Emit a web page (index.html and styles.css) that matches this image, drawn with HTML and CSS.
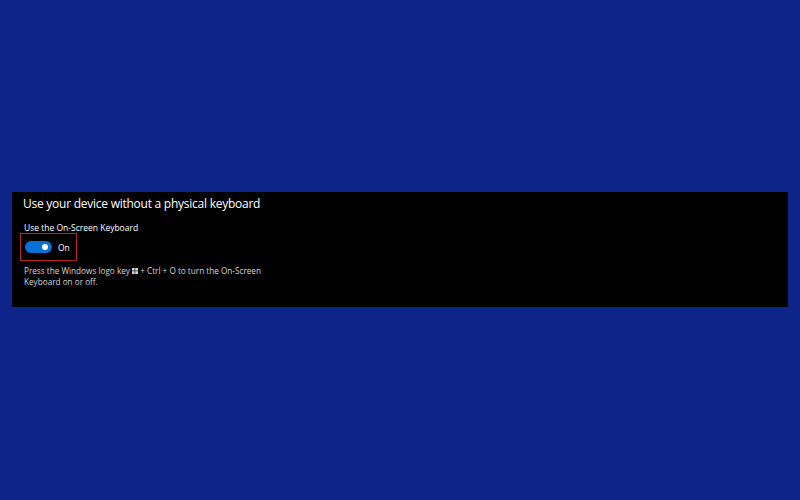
FILE: index.html
```html
<!DOCTYPE html>
<html lang="en">
<head>
  <meta charset="UTF-8" />
  <title>Keyboard settings</title>
  <link rel="stylesheet" href="styles.css">
</head>
<body>
  <div class="panel">
    <h2>Use your device without a physical keyboard</h2>
    <p class="label">Use the On-Screen Keyboard</p>
    <div class="toggle-box">
      <span class="toggle"><span class="knob"></span></span>
      <span class="state">On</span>
    </div>
    <p class="desc">Press the Windows logo key <svg class="win" viewBox="0 0 6 6" width="6" height="6"><rect x="0" y="0" width="2.6" height="2.6"/><rect x="3.2" y="0" width="2.8" height="2.6"/><rect x="0" y="3.2" width="2.6" height="2.8"/><rect x="3.2" y="3.2" width="2.8" height="2.8"/></svg> + Ctrl + O to turn the On-Screen<br>Keyboard on or off.</p>
  </div>
</body>
</html>
```

FILE: styles.css
```css
* { box-sizing: border-box; }
body {
  margin: 0;
  height: 500px;
  background: #0d2489;
  font-family: 'Open Sans', sans-serif;
  color: #fff;
  padding-top: 192px;
}

.panel {
  margin: 0 12px;
  height: 115px;
  background: #000;
  padding: 3px 11px 0;
}

.panel h2 {
  margin: 0;
  font-weight: 400;
  font-size: 12px;
  line-height: 18px;
  letter-spacing: -0.25px;
}

.label {
  margin: 10px 0 0 1px;
  font-size: 8.5px;
  line-height: 10px;
}

.toggle-box {
  display: flex;
  align-items: center;
  gap: 6px;
  width: 57px;
  height: 28px;
  margin: 0 0 0 -3px;
  padding-left: 4px;
  border: 1px solid #b3262c;
}

.toggle {
  position: relative;
  width: 27px;
  height: 12px;
  border-radius: 6px;
  background: #0a6fd6;
}

.knob {
  position: absolute;
  right: 4px;
  top: 3px;
  width: 6px;
  height: 6px;
  border-radius: 50%;
  background: #fff;
}

.state {
  font-size: 8.5px;
}

.desc {
  margin: 4px 0 0 1px;
  font-size: 8.2px;
  line-height: 11px;
  color: #d6d6d6;
}

.win {
  fill: #d6d6d6;
  vertical-align: 0;
}
```
